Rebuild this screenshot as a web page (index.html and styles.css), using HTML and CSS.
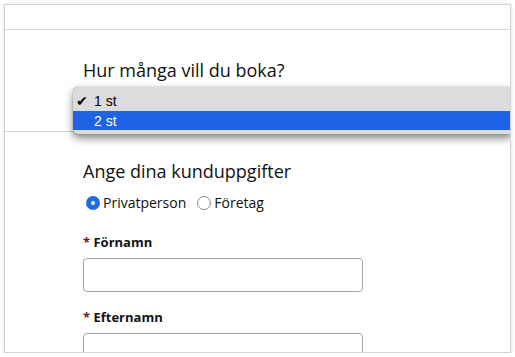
FILE: index.html
```html
<!DOCTYPE html>
<html lang="sv">
<head>
  <meta charset="UTF-8">
  <title>Boka</title>
  <link rel="stylesheet" href="styles.css">
</head>
<body>

  <div class="window">
    <div class="topbar"></div>

    <div class="booking">
      <h2>Hur många vill du boka?</h2>
    </div>

    <div class="menu">
      <div class="option selected"><span class="check">&#10004;</span>1 st</div>
      <div class="option active"><span class="check"></span>2 st</div>
    </div>

    <div class="customer">
      <h2>Ange dina kunduppgifter</h2>

      <div class="radios">
        <label class="radio"><span class="dot checked"></span>Privatperson</label>
        <label class="radio"><span class="dot"></span>Företag</label>
      </div>

      <div class="field">
        <label><span class="req">*</span> Förnamn</label>
        <input type="text">
      </div>

      <div class="field">
        <label><span class="req">*</span> Efternamn</label>
        <input type="text">
      </div>
    </div>
  </div>

</body>
</html>
```

FILE: styles.css
```css
body {
  margin: 0;
  padding: 0;
  background-color: #fff;
  color: #111;
  font-family: "Open Sans", Arial, sans-serif;
}

.window {
  box-sizing: border-box;
  position: relative;
  width: 507px;
  height: 349px;
  margin: 4px 0 0 4px;
  border: 1px solid #d2d2d2;
  box-shadow: 0 0 3px rgba(0, 0, 0, 0.15);
  overflow: hidden;
}

.topbar {
  height: 24px;
  border-bottom: 1px solid #d6d6d6;
}

h2 {
  margin: 0;
  font-size: 18px;
  font-weight: normal;
  line-height: 24px;
}

.booking {
  height: 102px;
  padding-left: 78px;
  border-bottom: 1px solid #d6d6d6;
  box-sizing: border-box;
}

.booking h2 {
  padding-top: 28px;
}

/* open select dropdown */
.menu {
  position: absolute;
  left: 68px;
  right: -2px;
  top: 82px;
  padding: 4px 0;
  background-color: #dcdcdc;
  border-radius: 5px 0 0 5px;
  box-shadow: 0 4px 8px rgba(0, 0, 0, 0.5), 0 0 1px rgba(0, 0, 0, 0.5);
  font-family: "Liberation Sans", Arial, sans-serif;
  font-size: 14px;
  color: #000;
}

.option {
  display: flex;
  align-items: center;
  height: 19px;
  padding-left: 3px;
}

.option.selected {
  height: 20px;
}

.option.active {
  background-color: #1f62e6;
  color: #fff;
}

.check {
  width: 18px;
  font-size: 14px;
}

.customer {
  padding-left: 78px;
}

.customer h2 {
  margin-top: 27px;
}

.radios {
  display: flex;
  gap: 8px;
  margin-top: 10px;
  font-size: 14px;
  line-height: 19px;
}

.radio {
  display: flex;
  align-items: center;
  gap: 3px;
}

.dot {
  box-sizing: border-box;
  width: 14px;
  height: 14px;
  border-radius: 50%;
  border: 1px solid #8c8c8c;
  background-color: #fff;
  position: relative;
  margin-left: 3px;
}

.dot.checked {
  border: none;
  background-color: #1d6ce6;
}

.dot.checked::after {
  content: "";
  position: absolute;
  left: 5px;
  top: 5px;
  width: 4px;
  height: 4px;
  border-radius: 50%;
  background-color: #fff;
}

.field {
  margin-top: 21px;
}

.field + .field {
  margin-top: 16px;
}

.field label {
  display: block;
  font-size: 13px;
  font-weight: bold;
  line-height: 18px;
}

.req {
  color: #6a1b1b;
}

.field input {
  display: block;
  box-sizing: border-box;
  width: 280px;
  height: 34px;
  margin-top: 7px;
  border: 1px solid #a5a5a5;
  border-radius: 4px;
}
```
